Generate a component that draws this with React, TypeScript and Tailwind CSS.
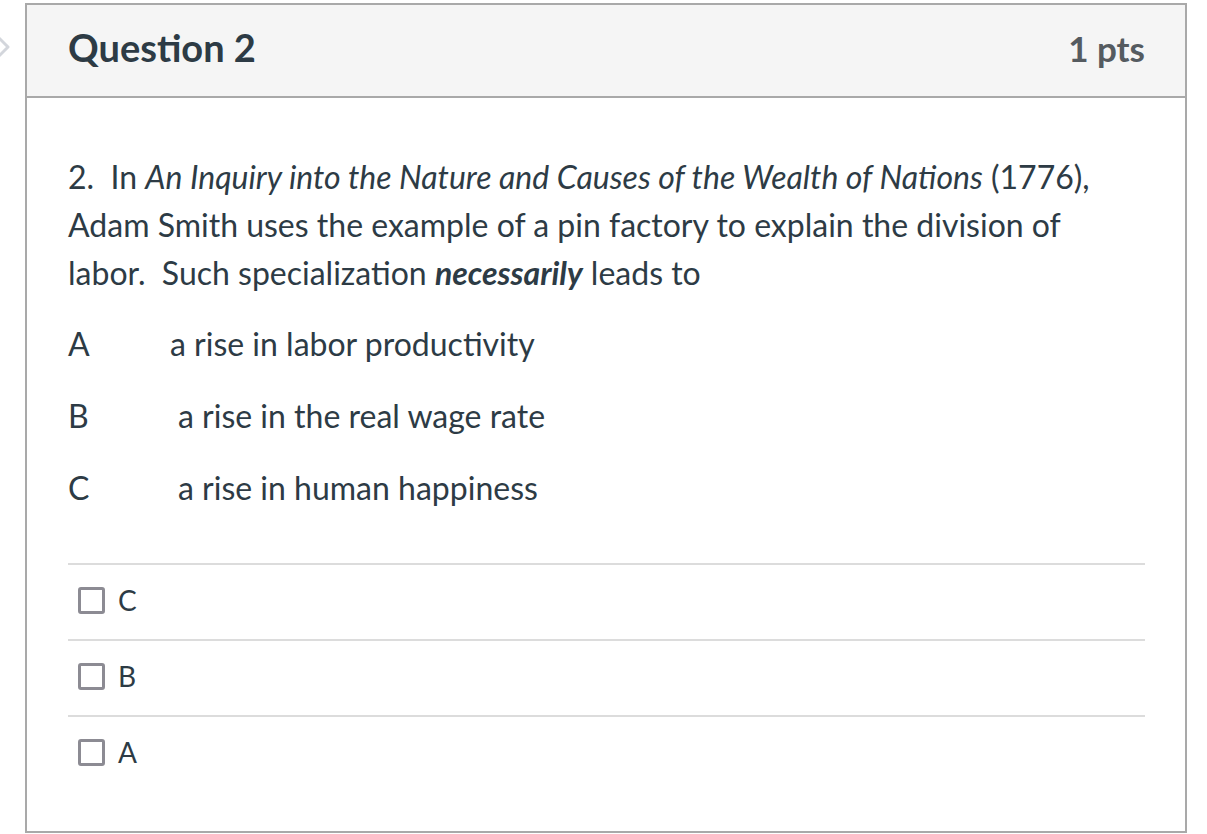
import React from 'react';

const answers = [
  { letter: 'A', text: 'a rise in labor productivity', pad: 'pl-[102px]' },
  { letter: 'B', text: 'a rise in the real wage rate', pad: 'pl-[110px]' },
  { letter: 'C', text: 'a rise in human happiness', pad: 'pl-[110px]' },
];

const choices = ['C', 'B', 'A'];

export default function App() {
  return (
    <div className="relative w-[1207px] h-[834px] bg-white overflow-hidden" style={{ fontFamily: 'Lato, "Noto Sans", sans-serif' }}>
      {/* side chevron */}
      <svg className="absolute left-[-6px] top-[34px]" width="18" height="26" viewBox="0 0 18 26">
        <path d="M4 3 L14 13 L4 23" fill="none" stroke="#d3d6dc" strokeWidth="3" strokeLinejoin="round" />
      </svg>

      <div className="absolute left-[25px] top-[3px] w-[1162px] h-[830px] border-2 border-[#a9a9a9] flex flex-col">
        {/* Header */}
        <div className="h-[93px] bg-[#f5f5f5] border-b-2 border-[#a9a9a9] flex items-center justify-between pl-[41px] pr-[40px] shrink-0">
          <h2 className="text-[38px] font-bold text-[#2d3b45] mt-[-7px]">Question 2</h2>
          <div className="text-[35px] font-bold text-[#555b60] mt-[-5px]">1 pts</div>
        </div>

        {/* Body */}
        <div className="pl-[41px] pr-[40px] pt-[55px] text-[#2d3b45]">
          <p className="text-[32px] leading-[48px]">
            2.&nbsp; In <em>An Inquiry into the Nature and Causes of the Wealth of Nations</em> (1776), Adam Smith uses the example of a pin factory to explain the division of labor.&nbsp; Such specialization <strong><em>necessarily</em></strong> leads to
          </p>

          <div className="mt-[23px] flex flex-col gap-[24px]">
            {answers.map((a) => (
              <div key={a.letter} className="flex text-[32px] leading-[48px]">
                <span className="w-0 whitespace-nowrap">{a.letter}</span>
                <span className={a.pad}>{a.text}</span>
              </div>
            ))}
          </div>

          <div className="mt-[51px]">
            {choices.map((c) => (
              <div key={c} className="border-t-2 border-[#dcdcdc] h-[76px] flex items-start pt-[20px]">
                <span className="ml-[10px] w-[27px] h-[27px] border-[3px] border-[#8c8b93] rounded-[3px] shrink-0 mt-[2px]" />
                <span className="ml-[13px] text-[28px] leading-[30px] text-[#2d3b45]">{c}</span>
              </div>
            ))}
          </div>
        </div>
      </div>
    </div>
  );
}
